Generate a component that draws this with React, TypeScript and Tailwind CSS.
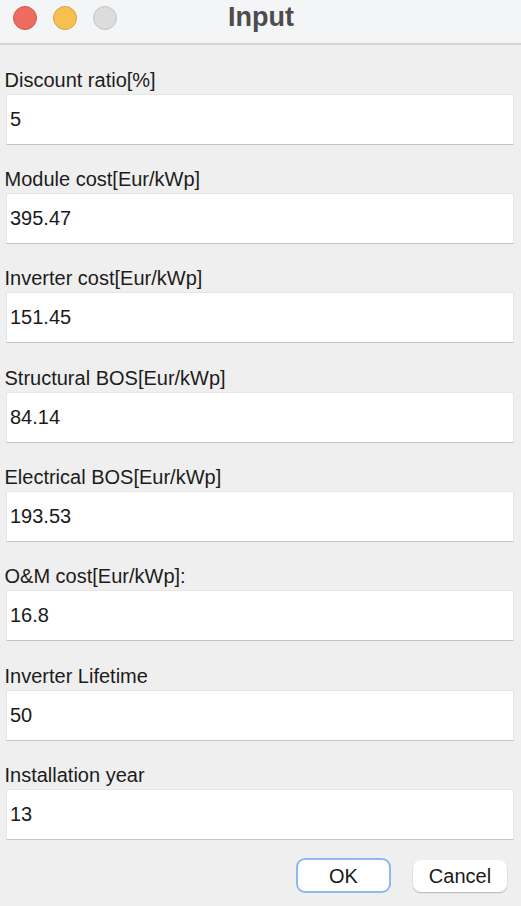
import React from 'react';

const FIELDS: { label: string; value: string }[] = [
  { label: 'Discount ratio[%]', value: '5' },
  { label: 'Module cost[Eur/kWp]', value: '395.47' },
  { label: 'Inverter cost[Eur/kWp]', value: '151.45' },
  { label: 'Structural BOS[Eur/kWp]', value: '84.14' },
  { label: 'Electrical BOS[Eur/kWp]', value: '193.53' },
  { label: 'O&M cost[Eur/kWp]:', value: '16.8' },
  { label: 'Inverter Lifetime', value: '50' },
  { label: 'Installation year', value: '13' },
];

export default function App() {
  return (
    <div
      className="w-[521px] h-[906px] bg-[#efefef] flex flex-col overflow-hidden"
      style={{ fontFamily: '"Liberation Sans", Arial, Helvetica, sans-serif' }}
    >
      {/* title bar */}
      <div className="relative h-[45px] shrink-0 bg-[#f4f5f7] border-b-2 border-[#d6d6d6] flex items-center justify-center">
        <div className="absolute left-[13px] top-[6px] flex gap-[16px]">
          <span className="w-[24px] h-[24px] rounded-full bg-[#ee6b60] border border-[#d35a4f]" />
          <span className="w-[24px] h-[24px] rounded-full bg-[#f6bf50] border border-[#d9a33f]" />
          <span className="w-[24px] h-[24px] rounded-full bg-[#dcdcdc] border border-[#c6c6c6]" />
        </div>
        <h1 className="text-[27px] leading-[27px] font-bold text-[#4c4c4c] -mt-[9px] ml-[1px]">Input</h1>
      </div>

      {/* fields */}
      <div className="flex flex-col gap-[21.4px] pt-[21.5px] pl-[6px] pr-[7.5px]">
        {FIELDS.map((f) => (
          <div key={f.label} className="flex flex-col">
            <label className="h-[27px] leading-[27px] text-[20px] text-[#1c1c1c] -ml-[1.5px]">{f.label}</label>
            <input
              defaultValue={f.value}
              className="h-[51px] w-full bg-white border border-[#e6e6e6] border-b-[#c4c4c4] pl-[3px] text-[20px] text-[#1a1a1a] outline-none"
            />
          </div>
        ))}
      </div>

      {/* buttons */}
      <div className="flex justify-end items-center gap-[22px] pr-[14px] mt-[18px]">
        <button className="w-[95px] h-[35px] rounded-[9px] bg-white border-2 border-[#8db9ee] text-[20px] text-[#1a1a1a]">
          OK
        </button>
        <button className="w-[94px] h-[32px] rounded-[8px] bg-white shadow-[0_1px_1.5px_rgba(0,0,0,0.25)] text-[20px] text-[#1a1a1a]">
          Cancel
        </button>
      </div>
    </div>
  );
}
